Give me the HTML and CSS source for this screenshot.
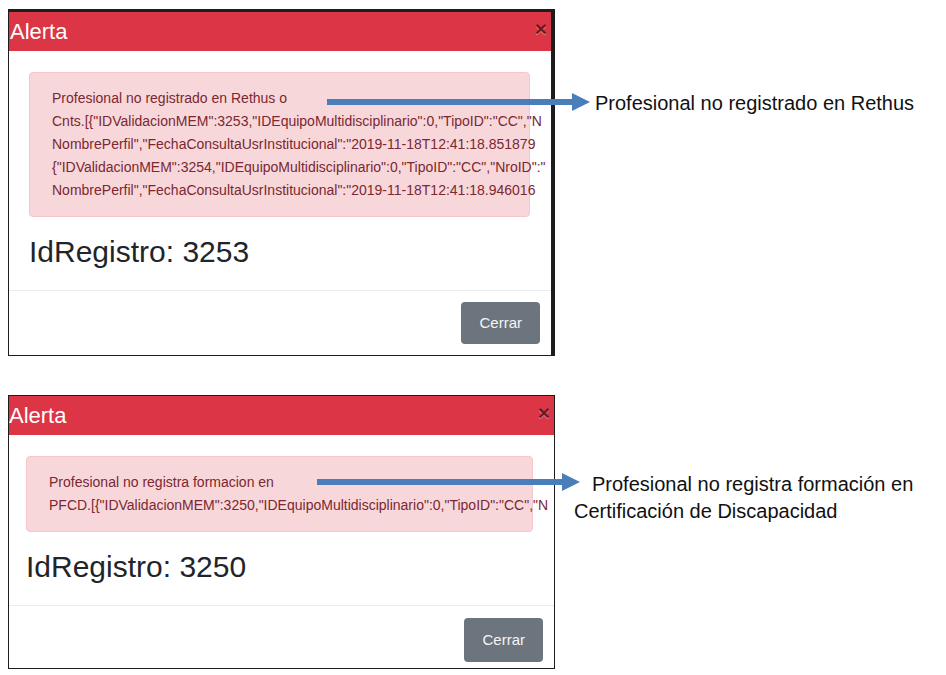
FILE: index.html
```html
<!DOCTYPE html>
<html lang="es">
<head>
<meta charset="utf-8">
<title>Alerta</title>
<link rel="stylesheet" href="styles.css">
</head>
<body>
<main class="page">
  <div class="row row-rethus">
    <section class="modal modal-framed" role="dialog" aria-labelledby="title-1">
      <header class="modal-header">
        <h2 class="modal-title" id="title-1">Alerta</h2>
        <button class="close" type="button">×</button>
      </header>
      <div class="modal-body">
        <div class="alert" role="alert">Profesional no registrado en Rethus o<br>Cnts.[{"IDValidacionMEM":3253,"IDEquipoMultidisciplinario":0,"TipoID":"CC","N<br>NombrePerfil","FechaConsultaUsrInstitucional":"2019-11-18T12:41:18.851879<br>{"IDValidacionMEM":3254,"IDEquipoMultidisciplinario":0,"TipoID":"CC","NroID":"<br>NombrePerfil","FechaConsultaUsrInstitucional":"2019-11-18T12:41:18.946016</div>
        <h3 class="record">IdRegistro: 3253</h3>
      </div>
      <footer class="modal-footer"><button class="btn" type="button">Cerrar</button></footer>
    </section>
    <svg class="arrow" width="263" height="18" viewBox="0 0 263 18" aria-hidden="true"><path d="M0 6H245V0L263 9L245 18V12H0Z"/></svg>
    <p class="note">Profesional no registrado en Rethus</p>
  </div>
  <div class="row row-pfcd">
    <section class="modal" role="dialog" aria-labelledby="title-2">
      <header class="modal-header">
        <h2 class="modal-title" id="title-2">Alerta</h2>
        <button class="close" type="button">×</button>
      </header>
      <div class="modal-body">
        <div class="alert" role="alert">Profesional no registra formacion en<br>PFCD.[{"IDValidacionMEM":3250,"IDEquipoMultidisciplinario":0,"TipoID":"CC","N</div>
        <h3 class="record">IdRegistro: 3250</h3>
      </div>
      <footer class="modal-footer"><button class="btn" type="button">Cerrar</button></footer>
    </section>
    <svg class="arrow" width="263" height="18" viewBox="0 0 263 18" aria-hidden="true"><path d="M0 6H245V0L263 9L245 18V12H0Z"/></svg>
    <p class="note">Profesional no registra formación en Certificación de Discapacidad</p>
  </div>
</main>
</body>
</html>
```
FILE: styles.css
```css
* { box-sizing: border-box; }

body {
  margin: 0;
  background: #fff;
  color: #212529;
  font-family: "Liberation Sans", Arial, sans-serif;
}

h2, h3, p { margin: 0; font-weight: 400; }

.page {
  display: flex;
  flex-direction: column;
  gap: 39px;
  padding: 9px 20px 6px 8px;
}

.row {
  position: relative;
  display: grid;
  grid-template-columns: minmax(0, 547fr) minmax(0, 371fr);
  align-items: start;
}

.modal {
  overflow: hidden;
  border: 1px solid #1c1c1e;
  background: #fff;
}

.modal-framed {
  border-width: 3px 4px 1px 1px;
}

.modal-header {
  display: flex;
  justify-content: space-between;
  align-items: center;
  height: 39px;
  padding-right: 4px;
  background: #dc3545;
}

.modal-title {
  padding-left: 1px;
  color: #fff;
  font-size: 22px;
  line-height: 24px;
}

.row-pfcd .modal-title { padding-left: 0; }

.close {
  padding: 0 0 6px;
  border: 0;
  background: none;
  color: #6b1a22;
  text-shadow: 0 1px 0 #e88a93;
  font: 700 21px/24px "Liberation Sans", Arial, sans-serif;
}

.modal-body { padding: 21px 21px 20px 20px; }

.row-pfcd .modal-body { padding-left: 17px; }

.alert {
  padding: 14px 22px;
  border: 1px solid #f5c6cb;
  border-radius: 4px;
  background: #f8d7da;
  color: #7a2831;
  font-size: 14px;
  line-height: 23px;
  white-space: nowrap;
}

.record {
  margin-top: 17px;
  font-size: 30px;
  line-height: 36px;
}

.modal-footer {
  display: flex;
  justify-content: flex-end;
  padding: 11px;
  border-top: 1px solid #e9ecef;
}

.row-pfcd .modal-footer { padding: 12px 11px 6px; }

.btn {
  padding: 9px 18px;
  border: 0;
  border-radius: 4px;
  background: #6c757d;
  color: #f4f5f6;
  font: 15px/24px "Liberation Sans", Arial, sans-serif;
}

.row-pfcd .btn { padding: 10px 18px; }

.arrow {
  position: absolute;
  top: 84px;
  left: 319px;
  fill: #4a7ebb;
}

.row-pfcd .arrow { top: 78px; left: 309px; }

.note {
  padding: 81px 0 0 40px;
  color: #111;
  font-size: 20px;
  line-height: 27px;
}

.row-pfcd .note {
  padding: 76px 0 0 19px;
  text-indent: 18px;
}
```
